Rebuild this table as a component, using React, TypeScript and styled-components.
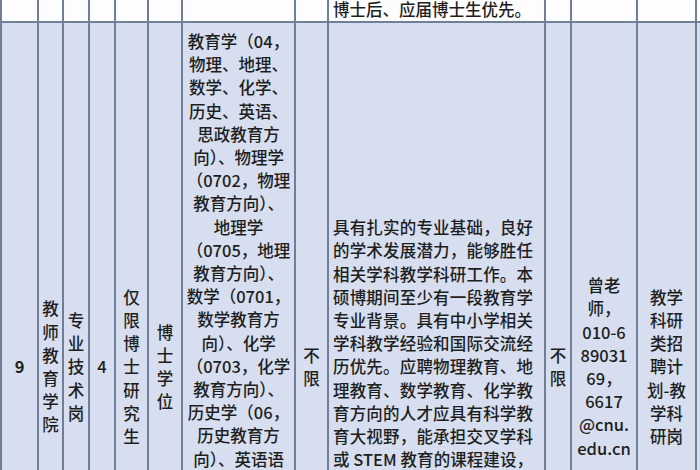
import * as React from 'react';
import styled, {createGlobalStyle, css} from 'styled-components';

const GlobalStyle = createGlobalStyle`
	html, body {
		margin: 0;
		padding: 0;
		background: #fff;
		overflow: hidden;
	}
`;

const RULE = '#6f7f97';

const Viewport = styled.div`
	width: 700px;
	height: 470px;
	overflow: hidden;
	background: #fff;
`;

const Sheet = styled.div`
	display: grid;
	grid-template-columns: 37px 25px 26px 26px 33px 34px 113px 33px 217px 26px 66px 59px 40px;
	grid-template-rows: 23px 690px;
	width: max-content;
	border-left: 2px solid ${RULE};
	font-family: 'Noto Sans CJK SC', 'Noto Sans', sans-serif;
	font-size: 16.5px;
	line-height: 23.2px;
	font-weight: 500;
	color: #1e1e1e;
`;

interface ICell {
	$head?: boolean
	$v?: 'top' | 'middle' | 'bottom'
	$left?: boolean
	$pad?: string
	$bold?: boolean
}

const Cell = styled.div<ICell>`
	box-sizing: border-box;
	border-right: 2px solid ${RULE};
	border-bottom: 2px solid ${RULE};
	background: ${p => (p.$head ? '#fdfdfd' : '#d6deef')};
	display: flex;
	flex-direction: column;
	justify-content: ${p => (p.$v === 'top' ? 'flex-start' : p.$v === 'bottom' ? 'flex-end' : 'center')};
	align-items: ${p => (p.$left ? 'stretch' : 'center')};
	text-align: ${p => (p.$left ? 'left' : 'center')};
	padding: ${p => p.$pad || '0'};
	white-space: nowrap;
	overflow: hidden;
	${p => p.$bold && css`font-weight: 700;`}
`;

const Line = styled.span<{$justify?: boolean}>`
	display: block;
	${p => p.$justify && css`
		text-align: justify;
		text-align-last: justify;
	`}
`;

const Lines = ({items, justify}: {items: string[], justify?: boolean}) => (
	<>
		{items.map((t, i) => (
			<Line key={i} $justify={justify && i < items.length - 1}>{t}</Line>
		))}
	</>
);

const chars = (s: string) => Array.from(s);

const majors = [
	'教育学（04，',
	'物理、地理、',
	'数学、化学、',
	'历史、英语、',
	'思政教育方',
	'向）、物理学',
	'（0702，物理',
	'教育方向）、',
	'地理学',
	'（0705，地理',
	'教育方向）、',
	'数学（0701，',
	'数学教育方',
	'向）、化学',
	'（0703，化学',
	'教育方向）、',
	'历史学（06，',
	'历史教育方',
	'向）、英语语',
];

const demands = [
	'具有扎实的专业基础，良好',
	'的学术发展潜力，能够胜任',
	'相关学科教学科研工作。本',
	'硕博期间至少有一段教育学',
	'专业背景。具有中小学相关',
	'学科教学经验和国际交流经',
	'历优先。应聘物理教育、地',
	'理教育、数学教育、化学教',
	'育方向的人才应具有科学教',
	'育大视野，能承担交叉学科',
	'或 STEM 教育的课程建设，',
	'开发与实施等相关工作，具',
	'有团队合作精神。',
];

const contact = ['曾老', '师，', '010-6', '89031', '69，', '6617', '@cnu.', 'edu.cn'];

const plan = ['教学', '科研', '类招', '聘计', '划-教', '学科', '研岗'];

const App: React.FC = () => (
	<Viewport>
		<GlobalStyle />
		<Sheet>
			<Cell $head />
			<Cell $head />
			<Cell $head />
			<Cell $head />
			<Cell $head />
			<Cell $head />
			<Cell $head />
			<Cell $head />
			<Cell $head $left $v="bottom" $pad="0 11px 0 4px">博士后、应届博士生优先。</Cell>
			<Cell $head />
			<Cell $head />
			<Cell $head />
			<Cell $head />

			<Cell $bold>9</Cell>
			<Cell><Lines items={chars('教师教育学院')} /></Cell>
			<Cell><Lines items={chars('专业技术岗')} /></Cell>
			<Cell>4</Cell>
			<Cell><Lines items={chars('仅限博士研究生')} /></Cell>
			<Cell><Lines items={chars('博士学位')} /></Cell>
			<Cell $v="top" $pad="7px 0 0"><Lines items={majors} /></Cell>
			<Cell><Lines items={chars('不限')} /></Cell>
			<Cell $left $pad="0 11px 0 4px"><Lines items={demands} justify /></Cell>
			<Cell><Lines items={chars('不限')} /></Cell>
			<Cell><Lines items={contact} /></Cell>
			<Cell><Lines items={plan} /></Cell>
			<Cell />
		</Sheet>
	</Viewport>
);

export default App;
